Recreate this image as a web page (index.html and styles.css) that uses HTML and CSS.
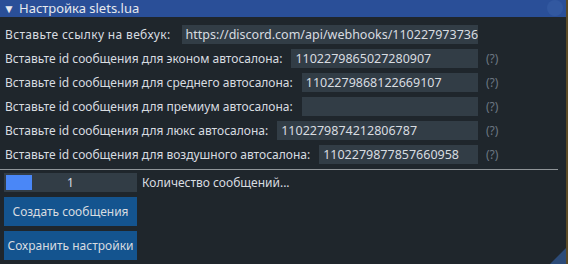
FILE: index.html
```html
<!DOCTYPE html>
<html>
<head>
  <title>Настройка slets.lua</title>
  <link rel="stylesheet" href="styles.css">
</head>
<body>

  <div class="window">
    <div class="title_bar">
      <span class="arrow">&#9660;</span>
      <span class="title">Настройка slets.lua</span>
      <span class="close_hover"></span>
    </div>

    <div class="content">
      <div class="row">
        <div class="pair">
          <span class="label wide">Вставьте ссылку на вебхук:</span>
          <div class="input">https://discord.com/api/webhooks/11022797373652</div>
        </div>
      </div>
      <div class="row">
        <div class="pair">
          <span class="label">Вставьте id сообщения для эконом автосалона:</span>
          <div class="input">1102279865027280907</div>
        </div>
        <span class="help">(?)</span>
      </div>
      <div class="row">
        <div class="pair">
          <span class="label">Вставьте id сообщения для среднего автосалона:</span>
          <div class="input">1102279868122669107</div>
        </div>
        <span class="help">(?)</span>
      </div>
      <div class="row">
        <div class="pair">
          <span class="label">Вставьте id сообщения для премиум автосалона:</span>
          <div class="input"></div>
        </div>
        <span class="help">(?)</span>
      </div>
      <div class="row">
        <div class="pair">
          <span class="label">Вставьте id сообщения для люкс автосалона:</span>
          <div class="input">1102279874212806787</div>
        </div>
        <span class="help">(?)</span>
      </div>
      <div class="row">
        <div class="pair">
          <span class="label">Вставьте id сообщения для воздушного автосалона:</span>
          <div class="input">1102279877857660958</div>
        </div>
        <span class="help">(?)</span>
      </div>

      <div class="separator"></div>

      <div class="slider_row">
        <div class="slider">
          <span class="grab"></span>
          <span class="slider_value">1</span>
        </div>
        <span class="label">Количество сообщений...</span>
      </div>

      <button class="btn">Создать сообщения</button>
      <button class="btn">Сохранить настройки</button>
    </div>

    <div class="resize_grip"></div>
  </div>

</body>
</html>
```

FILE: styles.css
```css
body {
  margin: 0;
  background-color: #5a4a26;
  font-family: "Noto Sans", sans-serif;
  font-size: 12px;
  color: #d8dce0;
  overflow: hidden;
}

.window {
  position: relative;
  width: 566px;
  height: 264px;
  background-color: #1f262c;
}

.title_bar {
  position: relative;
  display: flex;
  align-items: center;
  height: 17px;
  background-color: #2a4f98;
  color: #e6e9ee;
  font-size: 13px;
}

.arrow {
  font-size: 12px;
  width: 11px;
  margin-left: 3px;
  margin-right: 5px;
}

.title {
  line-height: 17px;
}

.close_hover {
  position: absolute;
  right: 3px;
  top: 0px;
  width: 16px;
  height: 16px;
  border-radius: 50%;
  background-color: #3258a0;
}

.content {
  padding: 8px 0 0 4px;
  display: flex;
  flex-direction: column;
}

.row {
  display: flex;
  align-items: center;
  height: 19px;
  margin-bottom: 5px;
}

.pair {
  display: flex;
  align-items: center;
  width: 474px;
}

.label {
  white-space: nowrap;
  margin-left: 1px;
}

.label.wide {
  letter-spacing: 0.35px;
  margin-right: 2px;
}

.input {
  flex: 1;
  margin-left: 9px;
  height: 19px;
  line-height: 19px;
  padding-left: 4px;
  background-color: #323d46;
  overflow: hidden;
  white-space: nowrap;
  font-size: 12.5px;
}

.help {
  margin-left: 8px;
  color: #6c7782;
}

.separator {
  height: 1px;
  width: 558px;
  margin-left: -4px;
  margin-top: 0px;
  margin-bottom: 3px;
  background-color: #8f9498;
}

.slider_row {
  display: flex;
  align-items: center;
  height: 19px;
  margin-bottom: 5px;
}

.slider {
  position: relative;
  width: 133px;
  height: 19px;
  line-height: 19px;
  background-color: #323d46;
  text-align: center;
  margin-right: 4px;
}

.grab {
  position: absolute;
  left: 2px;
  top: 2px;
  width: 26px;
  height: 15px;
  background-color: #4a87f7;
}

.slider_value {
  position: relative;
}

.btn {
  display: block;
  width: 133px;
  height: 29px;
  margin: 0 0 5px 0;
  padding: 0;
  border: none;
  background-color: #14548f;
  color: #d8dce0;
  font-family: "Noto Sans", sans-serif;
  font-size: 12px;
}

.resize_grip {
  position: absolute;
  right: 0;
  bottom: 0;
  width: 0;
  height: 0;
  border-left: 16px solid transparent;
  border-bottom: 16px solid #2c4b78;
}
```
